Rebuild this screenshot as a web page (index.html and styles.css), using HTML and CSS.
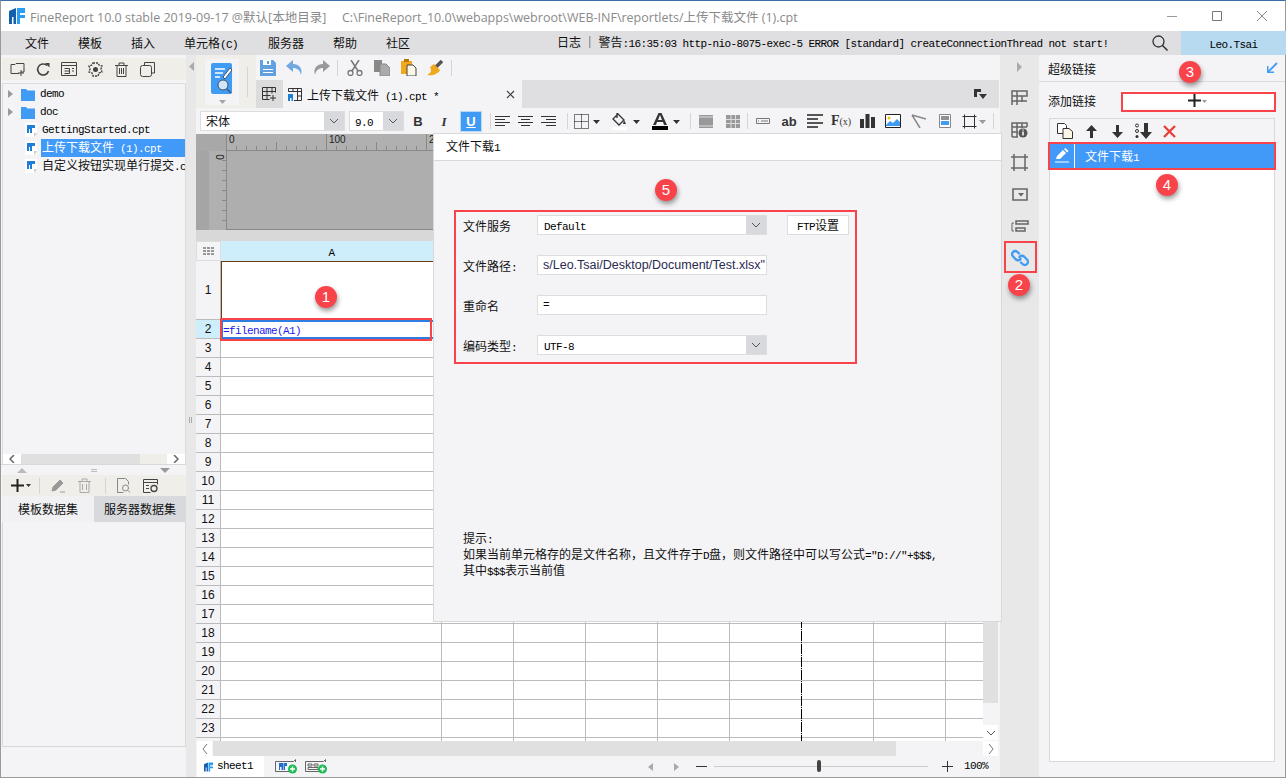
FILE: index.html
```html
<!DOCTYPE html>
<html lang="zh-CN">
<head>
    <meta charset="UTF-8">
    <title>FineReport 10.0</title>
    <link rel="stylesheet" href="styles.css">
</head>
<body>
<svg class="defs" xmlns="http://www.w3.org/2000/svg">
    <symbol id="logo" viewBox="0 0 16 16">
        <path d="M0 3 7 0v16H4.500V9H3v7H0z" fill="#1560ad"/>
        <path d="M8 0h8v5h-5v2h5v3h-5v6H8z" fill="#2a9df4"/>
    </symbol>
    <symbol id="folder" viewBox="0 0 14 13">
        <path d="M0 1h5l1.500 1.500H14V13H0z" fill="#3f9bf3"/>
    </symbol>
    <symbol id="cpt" viewBox="0 0 12 14">
        <path d="M0 0h12v10l-3 4H0z" fill="#fff"/>
        <path d="M9 14v-4h3z" fill="#ccc"/>
        <path d="M2 2h8v3H7v5H5V6H4v4H2z" fill="#1f7fd8"/>
    </symbol>
    <symbol id="chev" viewBox="0 0 10 6">
        <path d="M1 1l4 4 4-4" fill="none" stroke="#555"/>
    </symbol>
    <symbol id="caret" viewBox="0 0 7 4">
        <path d="M0 0h7L3.500 4z" fill="#333"/>
    </symbol>
</svg>

<div class="app">
    <header class="titlebar">
        <svg class="logo"><use href="#logo"/></svg>
        <span class="title">FineReport 10.0 stable 2019-09-17 @默认[本地目录]</span>
        <span class="path">C:\FineReport_10.0\webapps\webroot\WEB-INF\reportlets/上传下载文件 (1).cpt</span>
        <div class="winbtns">
            <svg width="14" height="14" viewBox="0 0 14 14"><path d="M2 7.500h10" stroke="#999"/></svg>
            <svg width="14" height="14" viewBox="0 0 14 14"><path d="M2.500 2.500h9v9h-9z" fill="none" stroke="#777"/></svg>
            <svg width="14" height="14" viewBox="0 0 14 14"><path d="M2 2l10 10M12 2 2 12" stroke="#888"/></svg>
        </div>
    </header>

    <nav class="menubar">
        <span>文件</span><span>模板</span><span>插入</span><span class="menu-cell">单元格<i class="m">(C)</i></span><span>服务器</span><span>帮助</span><span>社区</span>
        <div class="log">日志 ｜ 警告<i class="m">:16:35:03 http-nio-8075-exec-5 ERROR [standard] createConnectionThread not start!</i></div>
        <svg class="search" width="18" height="18" viewBox="0 0 18 18"><circle cx="7.500" cy="7.500" r="5.500" fill="none" stroke="#333" stroke-width="1.300"/><path d="M11.500 11.500l5 5" stroke="#333" stroke-width="1.600"/></svg>
        <div class="user"><i class="m">Leo.Tsai</i></div>
    </nav>

    <div class="main">
        <aside class="left">
            <div class="tools beige top">
                <span class="ic"><svg width="17" height="16" viewBox="0 0 17 16"><path d="M2 3.500h4l1-1h8v6M15 8v3H12M2 3.500v9h8" fill="none" stroke="#444"/><path d="M12 9v6M9 12h6" stroke="#444"/></svg></span>
                <span class="ic"><svg width="15" height="15" viewBox="0 0 15 15"><path d="M12.500 9A5.500 5.500 0 1 1 11 3.500" fill="none" stroke="#444" stroke-width="1.600"/><path d="M9 1h4.500v4.500z" fill="#444"/></svg></span>
                <span class="ic"><svg width="16" height="14" viewBox="0 0 16 14"><path d="M.5.500h15v13H.5zM.5 3.500h15M3.500 6.500h5v5h-5M3.500 9h5M11 6.500h2M11 9h2" fill="none" stroke="#444"/></svg></span>
                <span class="ic"><svg width="15" height="15" viewBox="0 0 15 15"><path d="M5 1h5l1 2 3 1-1 3 1 3-3 1-1 3H5l-1-3-3-1 1-3-1-3 3-1z" fill="none" stroke="#444" stroke-dasharray="2 1" stroke-width="1.400"/><circle cx="7.500" cy="7.500" r="2.500" fill="#444"/></svg></span>
                <span class="ic"><svg width="13" height="15" viewBox="0 0 13 15"><path d="M0 3.500h13M4 3V1h5v2M2 3.500v11h9v-11M4.500 6v6M6.500 6v6M8.500 6v6" fill="none" stroke="#444"/></svg></span>
                <span class="ic"><svg width="15" height="15" viewBox="0 0 15 15"><path d="M4.500 3V.5h10V11H12" fill="none" stroke="#444"/><rect x=".5" y="3.500" width="11" height="11" rx="2" fill="none" stroke="#444"/></svg></span>
            </div>
            <div class="tree">
                <div class="node"><b class="tri"></b><svg class="nic"><use href="#folder"/></svg><i class="m">demo</i></div>
                <div class="node"><b class="tri"></b><svg class="nic"><use href="#folder"/></svg><i class="m">doc</i></div>
                <div class="node leaf"><svg class="fic"><use href="#cpt"/></svg><span class="lbl plain"><i class="m">GettingStarted.cpt</i></span></div>
                <div class="node leaf"><svg class="fic"><use href="#cpt"/></svg><span class="lbl sel">上传下载文件<i class="m">&nbsp;(1).cpt</i></span></div>
                <div class="node leaf"><svg class="fic"><use href="#cpt"/></svg><span class="lbl">自定义按钮实现单行提交<i class="m">.cpt</i></span></div>
                <div class="tree-scroll">
                    <span class="sb-btn"><svg width="6" height="8" viewBox="0 0 6 8"><path d="M5 0 1 4l4 4" fill="none" stroke="#666" stroke-width="1.500"/></svg></span>
                    <span class="sb-thumb"></span><span class="sb-rest"></span>
                    <span class="sb-btn"><svg width="6" height="8" viewBox="0 0 6 8"><path d="M1 0l4 4-4 4" fill="none" stroke="#666" stroke-width="1.500"/></svg></span>
                </div>
            </div>
            <div class="split">
                <svg width="10" height="5" viewBox="0 0 10 5"><path d="M0 5h10L5 0z" fill="#bbb"/></svg>
                <span class="grip"></span>
                <svg width="10" height="5" viewBox="0 0 10 5"><path d="M0 0h10L5 5z" fill="#999"/></svg>
            </div>
            <div class="tools beige low">
                <svg class="l-plus" width="15" height="13" viewBox="0 0 13 13"><path d="M6.500 0v13M0 6.500h13" stroke="#222" stroke-width="2"/></svg>
                <svg class="l-car" width="5" height="3"><use href="#caret"/></svg>
                <b class="sep"></b>
                <span class="ic2"><svg width="15" height="15" viewBox="0 0 15 15"><path d="M1 13l1-4 7-7 3 3-7 7zM9 14h5" fill="#999" stroke="#999"/></svg></span>
                <span class="ic2"><svg width="13" height="15" viewBox="0 0 13 15"><path d="M0 3.500h13M4 3V1h5v2M2 3.500v11h9v-11M4.500 6v6M8.500 6v6" fill="none" stroke="#aaa"/></svg></span>
                <b class="sep"></b>
                <span class="ic2"><svg width="14" height="15" viewBox="0 0 14 15"><path d="M.5.500h8l3 3v3M.5.500v14h6" fill="none" stroke="#888"/><circle cx="8.500" cy="10" r="3" fill="none" stroke="#888"/><path d="M11 12.500l2 2" stroke="#888"/></svg></span>
                <span class="ic2"><svg width="15" height="14" viewBox="0 0 15 14"><path d="M.5.500h14v5M.5.500v13h7M.5 3.500h14M3 6.500h3M3 9.500h3" fill="none" stroke="#444"/><circle cx="11" cy="9.500" r="3" fill="none" stroke="#444" stroke-width="1.300"/></svg></span>
            </div>
            <div class="ds-tabs">
                <span>模板数据集</span><span class="on">服务器数据集</span>
            </div>
            <div class="ds-list"></div>
        </aside>

        <div class="gutter">
            <svg class="gut-top" width="5" height="9" viewBox="0 0 5 9"><path d="M5 0v9L0 4.500z" fill="#aaa"/></svg>
            <span class="gut-grip"></span>
        </div>

        <section class="center">
            <div class="toolbar">
                <div class="tpl-box">
                    <div class="tpl-btn">
                        <svg width="22" height="32" viewBox="0 0 22 32"><rect width="21" height="31" rx="2" fill="#3f9bf3"/><path d="M4 6h10M4 10h8M4 14h5" stroke="#fff" stroke-width="1.500"/><path d="M12 14l7-9 2 2-7 9z" fill="#fff" stroke="#456"/><circle cx="12" cy="22" r="5" fill="#cfe6fb" stroke="#456"/><path d="M16 26l4 4" stroke="#456" stroke-width="1.500"/></svg>
                        <svg class="tpl-car" width="7" height="4"><use href="#caret"/></svg>
                    </div>
                    <b class="sep tall"></b>
                </div>
                <div class="tool-col">
                    <div class="tool-row">
                        <span class="ic3"><svg width="16" height="16" viewBox="0 0 16 16"><path d="M0 0h13l3 3v13H0z" fill="#62a0e0"/><path d="M3 0h8v5H3zM3 9h10v1H3zM3 12h10v1H3z" fill="#fff"/><path d="M7 1h2v3H7z" fill="#62a0e0"/></svg></span>
                        <span class="ic3"><svg width="17" height="15" viewBox="0 0 17 15"><path d="M7 0 0 6l7 6V8c4 0 7 2 8 7 2-7-2-11-8-11z" fill="#72a8e0"/></svg></span>
                        <span class="ic3"><svg width="17" height="15" viewBox="0 0 17 15"><path d="M10 0l7 6-7 6V8c-4 0-7 2-8 7C0 8 4 4 10 4z" fill="#999"/></svg></span>
                        <b class="sep"></b>
                        <span class="ic3"><svg width="16" height="16" viewBox="0 0 16 16"><path d="M4 0l7 11M12 0 5 11" stroke="#777" stroke-width="1.500"/><circle cx="3.500" cy="13" r="2.500" fill="none" stroke="#777" stroke-width="1.300"/><circle cx="12.500" cy="13" r="2.500" fill="none" stroke="#777" stroke-width="1.300"/></svg></span>
                        <span class="ic3"><svg width="16" height="16" viewBox="0 0 16 16"><path d="M0 0h8v12H0z" fill="#888"/><path d="M6 4h6l4 4v8H6z" fill="#aaa" stroke="#888"/></svg></span>
                        <span class="ic3"><svg width="16" height="17" viewBox="0 0 16 17"><path d="M0 2h11v13H0z" fill="#f2a81c"/><path d="M3 0h5v3H3z" fill="#b87800"/><path d="M6 6h6l3 3v8H6z" fill="#fbf6e6" stroke="#444"/></svg></span>
                        <span class="ic3"><svg width="17" height="16" viewBox="0 0 17 16"><path d="M9 7l6-6" stroke="#555" stroke-width="3.500"/><path d="M7 4l6 6c-2 4-7 6-13 5 4-2 5-5 3-8z" fill="#f2a81c"/></svg></span>
                        <b class="sep"></b>
                    </div>
                    <div class="tabbar">
                        <span class="new-tab"><svg width="15" height="14" viewBox="0 0 15 14"><path d="M.5.500h13v5M.5.500v12h7M5 .5v12M.5 4.500h13M.5 8.500h8M10 .5v6M11 8v6M8 11h6" fill="none" stroke="#333"/></svg></span>
                        <span class="tab">
                            <svg width="14" height="13" viewBox="0 0 14 13"><path d="M.5.500h13v12H6M.5.500v3M.5 3.500h13M5 .5v3M9.500.5v12M9.500 8h4" fill="none" stroke="#333"/><path d="M0 6h5v7H3.500V10H2v3H0z" fill="#1f7fd8"/></svg>
                            <span class="tab-name">上传下载文件<i class="m">&nbsp;(1).cpt *</i></span>
                            <svg class="tab-x" width="9" height="9" viewBox="0 0 9 9"><path d="M1 1l7 7M8 1 1 8" stroke="#444" stroke-width="1.200"/></svg>
                        </span>
                        <svg class="tab-menu" width="13" height="11" viewBox="0 0 13 11"><path d="M0 0h7v3H3v5H0z" fill="#333"/><path d="M5 5h8l-4 5z" fill="#333"/></svg>
                    </div>
                </div>
            </div>

            <div class="fmtbar">
                <div class="combo font"><span>宋体</span><span class="arrow"><svg width="10" height="6"><use href="#chev"/></svg></span></div>
                <div class="combo size"><span><i class="m">9.0</i></span><span class="arrow"><svg width="10" height="6"><use href="#chev"/></svg></span></div>
                <span class="fb b-first"><b class="letter">B</b></span>
                <span class="fb"><b class="letter it">I</b></span>
                <span class="fb ubtn"><b class="letter under">U</b></span>
                <b class="sep s8"></b>
                <span class="fb w23"><svg width="15" height="11" viewBox="0 0 15 11"><path d="M0 .5h15M0 3.500h10M0 6.500h15M0 9.500h10" stroke="#333"/></svg></span>
                <span class="fb w23"><svg width="15" height="11" viewBox="0 0 15 11"><path d="M0 .5h15M3 3.500h9M0 6.500h15M3 9.500h9" stroke="#333"/></svg></span>
                <span class="fb w23"><svg width="15" height="11" viewBox="0 0 15 11"><path d="M0 .5h15M5 3.500h10M0 6.500h15M5 9.500h10" stroke="#333"/></svg></span>
                <b class="sep s7"></b>
                <span class="fb w32"><svg width="15" height="15" viewBox="0 0 15 15"><path d="M.5.500h14v14H.5zM7.500.5v14M.5 7.500h14" fill="none" stroke="#000" stroke-dasharray="1 1"/></svg><svg class="mini" width="7" height="4"><use href="#caret"/></svg></span>
                <span class="fb w40"><svg width="16" height="17" viewBox="0 0 16 17"><path d="M6 1l6 6-5 5-6-6zM5 0v5" fill="none" stroke="#333" stroke-width="1.300"/><path d="M12 7l2 4h-3z" fill="#333"/><path d="M0 14h15v3H0z" fill="#fff"/></svg><svg class="mini" width="7" height="4"><use href="#caret"/></svg></span>
                <span class="fb w40"><svg width="16" height="17" viewBox="0 0 16 17"><path d="M1 12 6.500 0h3L15 12h-3l-1-3H5l-1 3zM6 7h4L8 2z" fill="#333" fill-rule="evenodd"/><path d="M0 13h16v4H0z" fill="#000"/></svg><svg class="mini" width="7" height="4"><use href="#caret"/></svg></span>
                <b class="sep s-a"></b>
                <span class="fb w27"><svg width="14" height="13" viewBox="0 0 14 13"><path d="M0 0h14v13H0z" fill="#999"/><path d="M0 2h14M0 11h14" stroke="#ddd"/></svg></span>
                <span class="fb w27"><svg width="14" height="13" viewBox="0 0 14 13"><path d="M0 0h14v13H0z" fill="#999"/><path d="M0 4.500h14M0 8.500h14M5 0v13M9.500 0v13" stroke="#ddd"/></svg></span>
                <b class="sep s-b"></b>
                <span class="fb w26"><svg width="14" height="6" viewBox="0 0 14 6"><path d="M.5.500h13v5H.5z" fill="none" stroke="#777"/><path d="M5 3h7M2 3h1" stroke="#777"/></svg></span>
                <span class="fb w26"><b class="ab">ab</b></span>
                <span class="fb w26"><svg width="16" height="14" viewBox="0 0 16 14"><path d="M0 1h16M0 5h11M0 9h16M0 13h11" stroke="#555" stroke-width="2"/></svg></span>
                <span class="fb w26"><span class="fx">F<small>(x)</small></span></span>
                <span class="fb w26"><svg width="15" height="14" viewBox="0 0 15 14"><path d="M0 5h4v9H0zM5.500 0h4v14h-4zM11 3h4v11h-4z" fill="#333"/></svg></span>
                <span class="fb w26"><svg width="16" height="14" viewBox="0 0 16 14"><path d="M.5.500h15v13H.5z" fill="#fff" stroke="#222"/><path d="M1 11l4-4 3 2 4-4 3 3v4H1z" fill="#3f9bf3"/><circle cx="4" cy="4" r="1.500" fill="#f2c21c"/></svg></span>
                <span class="fb w26"><svg width="16" height="14" viewBox="0 0 16 14"><path d="M1 1l14 4M1 1l8 13" stroke="#888" stroke-width="1.500"/></svg></span>
                <span class="fb w26"><svg width="12" height="14" viewBox="0 0 12 14"><path d="M.5.500h11v13H.5z" fill="#fff" stroke="#888"/><path d="M2 3h8M2 5h8" stroke="#222"/><path d="M2 7h8v4H2z" fill="#3f9bf3"/></svg></span>
                <span class="fb w30"><svg width="15" height="15" viewBox="0 0 15 15"><path d="M2.500.5v14M12.500.5v14M.5 2.500h14M.5 12.500h14" fill="none" stroke="#333"/></svg><svg class="mini" width="7" height="4"><path d="M0 0h7L3.500 4z" fill="#999"/></svg></span>
                <b class="sep s-c"></b>
            </div>

            <div class="ruler">
                <div class="r-corner"></div>
                <div class="r-top"><span>0</span><span>100</span><span>200</span></div>
                <div class="r-edge"></div>
                <div class="r-left"><span>0</span></div>
                <div class="r-paper"></div>
                <div class="r-foot"></div>
            </div>

            <div class="sheet-wrap">
                <div class="sheet">
                    <div class="row head">
                        <span class="corner"><svg width="11" height="8" viewBox="0 0 11 8"><path d="M0 0h3v2H0zM4 0h3v2H4zM8 0h3v2H8zM0 3h3v2H0zM4 3h3v2H4zM8 3h3v2H8zM0 6h3v2H0zM4 6h3v2H4zM8 6h3v2H8z" fill="#999"/></svg></span>
                        <span class="col-a"><i class="m">A</i></span>
                    </div>
                    <div class="row first"><span class="num">1</span><span class="a sel-top"></span><span class="rest"></span></div>
                    <div class="row"><span class="num cur">2</span><span class="a cur-cell"><i class="m f">=filename(A1)</i></span><span class="rest"></span></div>
                    <div class="row"><span class="num">3</span><span class="a"></span><span class="rest"></span></div>
                    <div class="row"><span class="num">4</span><span class="a"></span><span class="rest"></span></div>
                    <div class="row"><span class="num">5</span><span class="a"></span><span class="rest"></span></div>
                    <div class="row"><span class="num">6</span><span class="a"></span><span class="rest"></span></div>
                    <div class="row"><span class="num">7</span><span class="a"></span><span class="rest"></span></div>
                    <div class="row"><span class="num">8</span><span class="a"></span><span class="rest"></span></div>
                    <div class="row"><span class="num">9</span><span class="a"></span><span class="rest"></span></div>
                    <div class="row"><span class="num">10</span><span class="a"></span><span class="rest"></span></div>
                    <div class="row"><span class="num">11</span><span class="a"></span><span class="rest"></span></div>
                    <div class="row"><span class="num">12</span><span class="a"></span><span class="rest"></span></div>
                    <div class="row"><span class="num">13</span><span class="a"></span><span class="rest"></span></div>
                    <div class="row"><span class="num">14</span><span class="a"></span><span class="rest"></span></div>
                    <div class="row"><span class="num">15</span><span class="a"></span><span class="rest"></span></div>
                    <div class="row"><span class="num">16</span><span class="a"></span><span class="rest"></span></div>
                    <div class="row"><span class="num">17</span><span class="a"></span><span class="rest"></span></div>
                    <div class="row"><span class="num">18</span><span class="a"></span><span class="rest"></span></div>
                    <div class="row"><span class="num">19</span><span class="a"></span><span class="rest"></span></div>
                    <div class="row"><span class="num">20</span><span class="a"></span><span class="rest"></span></div>
                    <div class="row"><span class="num">21</span><span class="a"></span><span class="rest"></span></div>
                    <div class="row"><span class="num">22</span><span class="a"></span><span class="rest"></span></div>
                    <div class="row"><span class="num">23</span><span class="a"></span><span class="rest"></span></div>
                    <div class="row tail"><span class="num"></span><span class="a"></span><span class="rest"></span></div>
                    <span class="page-break"></span>
                </div>
                <div class="vscroll">
                    <span class="v-thumb"></span>
                    <span class="sb-btn v-btn"><svg width="10" height="6"><use href="#chev"/></svg></span>
                </div>
            </div>

            <div class="hscroll">
                <span class="sb-btn h-btn"><svg width="6" height="10" viewBox="0 0 6 10"><path d="M5 0 1 5l4 5" fill="none" stroke="#777"/></svg></span>
                <span class="h-thumb"></span>
                <span class="sb-btn h-btn"><svg width="6" height="10" viewBox="0 0 6 10"><path d="M1 0l4 5-4 5" fill="none" stroke="#777"/></svg></span>
            </div>

            <div class="sheetbar">
                <span class="sheet-tab"><svg width="9" height="10"><use href="#logo"/></svg><i class="m">sheet1</i></span>
                <svg class="add1" width="23" height="15" viewBox="0 0 23 15"><path d="M.5 2.500h18l2-2v2.500M.5 2.500v10h14" fill="none" stroke="#666"/><path d="M4 4h4v7H6.500V8H5v3H4zM8.500 4H12v3h-2v4H8.500z" fill="#1f6fc8"/><circle cx="17.500" cy="10" r="4.500" fill="#1dbb55"/><path d="M17.500 7.500v5M15 10h5" stroke="#fff" stroke-width="1.500"/></svg>
                <svg class="add2" width="23" height="15" viewBox="0 0 23 15"><path d="M.5 2.500h18l2-2v2.500M.5 2.500v10h14M3 5h4v2H3zM9 5h4v2H9zM3 8.500h10v2H3z" fill="none" stroke="#666"/><circle cx="17.500" cy="10" r="4.500" fill="#1dbb55"/><path d="M17.500 7.500v5M15 10h5" stroke="#fff" stroke-width="1.500"/></svg>
                <svg class="nav1" width="5" height="8" viewBox="0 0 5 8"><path d="M5 0v8L0 4z" fill="#aaa"/></svg>
                <svg class="nav2" width="5" height="8" viewBox="0 0 5 8"><path d="M0 0v8l5-4z" fill="#aaa"/></svg>
                <svg class="minus" width="11" height="3" viewBox="0 0 11 3"><path d="M0 1.500h11" stroke="#333"/></svg>
                <span class="slider"><span class="knob"></span></span>
                <svg class="plus" width="11" height="11" viewBox="0 0 11 11"><path d="M0 5.500h11M5.500 0v11" stroke="#333"/></svg>
                <i class="m zoom">100%</i>
            </div>
        </section>

        <div class="sidebar">
            <svg class="side-tri" width="5" height="10" viewBox="0 0 5 10"><path d="M0 0v10l5-5z" fill="#aaa"/></svg>
            <span class="side"><svg width="17" height="16" viewBox="0 0 17 16"><path d="M1 15V1h15v5H1M6 1v14M11 6v6M1 11h15" fill="none" stroke="#666" stroke-width="1.500"/></svg></span>
            <span class="side"><svg width="17" height="16" viewBox="0 0 17 16"><path d="M1 15V1h15v4M1 5h15M1 10h6M6 1v14M11 1v5M1 15h6" fill="none" stroke="#666" stroke-width="1.500"/><circle cx="12" cy="11" r="4.500" fill="#555"/><path d="M12 9.500v4M12 7.500v1" stroke="#fff" stroke-width="1.500"/></svg></span>
            <span class="side"><svg width="17" height="17" viewBox="0 0 17 17"><path d="M3 0v17M14 0v17M0 3h17M0 14h17" stroke="#666" stroke-width="1.500"/></svg></span>
            <span class="side"><svg width="16" height="13" viewBox="0 0 16 13"><path d="M1 1h14v11H1z" fill="none" stroke="#666" stroke-width="1.600"/><path d="M6 5h6L9 8.500z" fill="#666"/></svg></span>
            <span class="side"><svg width="18" height="13" viewBox="0 0 18 13"><path d="M3 3H1v8h2" fill="none" stroke="#666"/><path d="M5 1h12v3H5zM5 8h9v3H5z" fill="none" stroke="#666" stroke-width="1.500"/></svg></span>
            <span class="side"><svg width="18" height="18" viewBox="0 0 18 18"><g fill="none" stroke="#3f9bf3" stroke-width="2.400" stroke-linecap="round"><path d="M8 4.500 6.500 3A3 3 0 0 0 2 7.500L5 10.500A3 3 0 0 0 9.500 10"/><path d="M10 13.500l1.500 1.500A3 3 0 0 0 16 10.500L13 7.500A3 3 0 0 0 8.500 8"/></g></svg></span>
        </div>

        <aside class="right">
            <div class="r-head"><span>超级链接</span>
                <svg width="12" height="12" viewBox="0 0 12 12"><path d="M11 1 2 10" stroke="#3f9bf3" stroke-width="1.800"/><path d="M1 4v7h7v-1.500H2.500V4z" fill="#3f9bf3"/></svg>
            </div>
            <div class="r-add"><span class="r-label">添加链接</span>
                <span class="r-addbtn"><svg width="13" height="13" viewBox="0 0 13 13"><path d="M6.500 0v13M0 6.500h13" stroke="#222" stroke-width="2"/></svg><svg class="r-car" width="5" height="3"><path d="M0 0h5L2.500 3z" fill="#999"/></svg></span>
            </div>
            <div class="links">
                <div class="links-tools">
                    <span class="lt"><svg width="16" height="16" viewBox="0 0 16 16"><path d="M.5.500h7l2 2v8h-9z" fill="#fff" stroke="#333"/><path d="M6 5.500h6l3.500 3v7H6z" fill="#fbf6e6" stroke="#333"/></svg></span>
                    <span class="lt"><svg width="11" height="13" viewBox="0 0 11 13"><path d="M5.500 0 11 6H7v7H4V6H0z" fill="#333"/></svg></span>
                    <span class="lt"><svg width="11" height="13" viewBox="0 0 11 13"><path d="M5.500 13 11 7H7V0H4v7H0z" fill="#333"/></svg></span>
                    <span class="lt"><svg width="17" height="16" viewBox="0 0 17 16"><circle cx="2" cy="2.500" r="1.500" fill="none" stroke="#333"/><circle cx="2" cy="8" r="1.500" fill="none" stroke="#333"/><circle cx="2" cy="13.500" r="1.500" fill="#333"/><path d="M11 16l6-7h-4V0H9v9H5z" fill="#333"/></svg></span>
                    <span class="lt"><svg width="13" height="13" viewBox="0 0 13 13"><path d="M1 1l11 11M12 1 1 12" stroke="#e8403a" stroke-width="2.400"/></svg></span>
                </div>
                <div class="link-item">
                    <span class="pen"><svg width="15" height="15" viewBox="0 0 15 15"><path d="M1 11l1-3 6-6 3 3-6 6zM9 1l1.500-1L13.500 3 12 4.500z" fill="#fff"/><path d="M0 14h14" stroke="#fff"/></svg></span>
                    <span class="link-name">文件下载<i class="m">1</i></span>
                </div>
            </div>
        </aside>
    </div>

    <div class="dialog">
        <div class="dlg-head">文件下载<i class="m">1</i></div>
        <div class="dlg-form">
            <div class="field"><label>文件服务</label><div class="select"><span><i class="m">Default</i></span><span class="arrow"><svg width="10" height="6"><use href="#chev"/></svg></span></div><span class="ftp"><i class="m">FTP</i>设置</span></div>
            <div class="field"><label>文件路径<i class="m">:</i></label><div class="input path-val">s/Leo.Tsai/Desktop/Document/Test.xlsx"</div></div>
            <div class="field"><label>重命名</label><div class="input"><i class="m">=</i></div></div>
            <div class="field"><label>编码类型<i class="m">:</i></label><div class="select"><span><i class="m">UTF-8</i></span><span class="arrow"><svg width="10" height="6"><use href="#chev"/></svg></span></div></div>
        </div>
        <div class="hint">
            <div>提示<i class="m">:</i></div>
            <div>如果当前单元格存的是文件名称，且文件存于<i class="m">D</i>盘，则文件路径中可以写公式<i class="m">="D://"+$$$,</i></div>
            <div>其中<i class="m">$$$</i>表示当前值</div>
        </div>
    </div>

    <span class="mark m1"></span>
    <span class="mark m2"></span>
    <span class="mark m3"></span>
    <span class="mark m4"></span>
    <span class="mark m5"></span>
    <span class="badge b1">1</span>
    <span class="badge b2">2</span>
    <span class="badge b3">3</span>
    <span class="badge b4">4</span>
    <span class="badge b5">5</span>
</div>
</body>
</html>
```

FILE: styles.css
```css
* { margin: 0; padding: 0; box-sizing: border-box; }

html, body { width: 1286px; height: 778px; overflow: hidden; }

body {
    font-family: "Noto Sans CJK SC", "Liberation Sans", sans-serif;
    font-size: 12px;
    color: #111;
    background: #f4f4f6;
}

i { font-style: normal; }
svg { display: block; flex: none; }
.defs { display: none; }

/* SimSun latin is half width and tall, squeeze Liberation Mono to the same 6px advance */
.m { font: 11px/1 "Liberation Mono", monospace; letter-spacing: -0.6px; color: #000; }

.app {
    position: relative;
    width: 1286px;
    height: 778px;
    display: flex;
    flex-direction: column;
    border-top: 1px solid #3a6ea5;
    border-left: 1px solid #9a9a9a;
    border-right: 1px solid #9a9a9a;
    border-bottom: 1px solid #9a9a9a;
}

/* title bar */
.titlebar {
    height: 30px;
    background: #fff;
    display: flex;
    align-items: center;
    padding-left: 8px;
    font-family: "Open Sans", "Noto Sans CJK SC", sans-serif;
    color: #8a8a8a;
    flex: none;
}
.logo { width: 16px; height: 16px; }
.title { margin-left: 5px; width: 312px; white-space: nowrap; font-size: 12.500px; }
.path { white-space: nowrap; font-size: 12.500px; }
.winbtns { margin-left: auto; display: flex; gap: 31px; padding-right: 16px; }

/* menu */
.menubar {
    height: 24px;
    background: #dfdfe2;
    display: flex;
    align-items: center;
    gap: 29px;
    padding-left: 24px;
    line-height: 24px;
    flex: none;
}
.menu-cell { margin-right: 1px; }
.log { position: absolute; left: 556px; top: 29px; white-space: nowrap; }
.search { margin-left: auto; }
.user {
    width: 105px;
    height: 24px;
    background: #b8daf0;
    text-align: center;
    margin-left: -17px;
    margin-right: -1px;
}

.main { flex: 1; display: flex; min-height: 0; }

/* left column */
.left { width: 185px; display: flex; flex-direction: column; flex: none; }
.beige { background: #f0eee8; }
.tools { display: flex; align-items: center; flex: none; }
.tools.top { height: 22px; margin-top: 3px; padding-left: 2px; margin-left: 1px; }
.ic { width: 26px; display: flex; justify-content: center; }

.tree {
    height: 381px;
    margin: 3px 0 0 1px;
    border: 1px solid #dcdcdc;
    border-bottom: 0;
    padding-top: 1px;
    display: flex;
    flex-direction: column;
    overflow: hidden;
    position: relative;
    flex: none;
}
.node { height: 18px; display: flex; align-items: center; white-space: nowrap; position: relative; flex: none; }
.tri {
    width: 0; height: 0;
    margin-left: 5px;
    border-left: 5px solid #999;
    border-top: 4px solid transparent;
    border-bottom: 4px solid transparent;
}
.nic { width: 14px; height: 13px; margin: 0 5px 0 8px; }
.fic { width: 12px; height: 14px; margin-left: 22px; }
.lbl { display: block; margin-left: 4px; height: 18px; line-height: 15px; flex: 1; padding-left: 1px; overflow: hidden; }
.lbl.plain { display: flex; align-items: center; }
.sel { background: #4199f8; color: #fff; }
.sel .m { color: #fff; }
.tree-scroll {
    position: absolute;
    left: 0; right: 0; bottom: 0;
    height: 10px;
    display: flex;
}
.sb-btn { background: #fff; display: flex; align-items: center; justify-content: center; flex: none; }
.tree-scroll .sb-btn { width: 18px; }
.sb-thumb { flex: 1; background: #e0e0e0; }
.sb-rest { width: 27px; background: #f0eee8; }

.split {
    height: 11px;
    background: #f4f4f6;
    border-top: 1px solid #d8d8d8;
    display: flex;
    align-items: center;
    justify-content: space-between;
    padding: 0 16px;
    flex: none;
}
.grip { width: 6px; height: 3px; border: solid #bbb; border-width: 1px 0; }

.tools.low { height: 21px; padding-left: 8px; margin-left: 1px; }
.l-car { margin-left: 1px; }
.sep { display: block; width: 1px; height: 16px; background: #d5d5d5; flex: none; }
.low .sep { margin: 0 5px 0 8px; }
.ic2 { width: 26px; display: flex; justify-content: center; }

.ds-tabs { display: flex; height: 26px; line-height: 25px; text-align: center; font-size: 12px; flex: none; margin-left: 1px; }
.ds-tabs span { flex: 1; background: #f1f1f3; }
.ds-tabs .on { background: #d8d9dd; }
.ds-list { height: 225px; margin-left: 1px; border: 1px solid #d8d8d8; border-top: 0; flex: none; }

/* gutter between left column and sheet */
.gutter { width: 10px; background: #e8e8e8; position: relative; flex: none; }
.gut-top { position: absolute; left: 3px; top: 7px; }
.gut-grip { position: absolute; left: 3px; top: 362px; width: 3px; height: 6px; border: solid #aaa; border-width: 0 1px; }

/* centre */
.center { width: 804px; display: flex; flex-direction: column; flex: none; }
.toolbar { height: 53px; display: flex; flex: none; }
.tpl-box { width: 60px; background: #f0eee8; display: flex; align-items: center; padding-left: 9px; flex: none; }
.tpl-btn {
    width: 34px;
    height: 46px;
    background: #f4f4f6;
    display: flex;
    flex-direction: column;
    align-items: center;
    padding-top: 4px;
    flex: none;
}
.tpl-car { margin-top: 5px; opacity: 0.4; }
.sep.tall { height: 30px; margin-left: 8px; }
.tool-col { flex: 1; display: flex; flex-direction: column; }
.tool-row { height: 25px; display: flex; align-items: center; margin-left: -2px; }
.ic3 { width: 27px; display: flex; justify-content: center; }
.tool-row .sep { margin: 0 3px 0 2px; }

.tabbar { height: 28px; background: #dfdfe2; display: flex; align-items: center; position: relative; margin-right: 1px; }
.new-tab { width: 27px; height: 28px; background: #dcdcdc; display: flex; align-items: center; justify-content: center; flex: none; }
.tab { width: 239px; height: 28px; background: #f4f4f6; display: flex; align-items: center; padding-left: 5px; position: relative; flex: none; }
.tab-name { margin-left: 5px; white-space: nowrap; }
.tab-x { position: absolute; right: 7px; top: 10px; }
.tab-menu { margin-left: auto; margin-right: 12px; }

.fmtbar { height: 26px; display: flex; align-items: center; padding-left: 4px; flex: none; }
.combo { display: flex; height: 20px; background: #fff; border: 1px solid #ddd; line-height: 18px; flex: none; }
.combo > span:first-child { flex: 1; padding-left: 5px; }
.combo.font { width: 145px; font-size: 12px; }
.combo.size { width: 55px; margin-left: 4px; }
.combo .arrow, .select .arrow {
    width: 20px;
    background: #d8d9dd;
    display: flex;
    align-items: center;
    justify-content: center;
    flex: none;
}
.fb { width: 26px; height: 21px; display: flex; align-items: center; justify-content: center; flex: none; }
.b-first { margin-left: 1px; }
.letter { font: bold 13px/1 "Liberation Sans", sans-serif; color: #333; }
.letter.it { font-family: "Liberation Serif", serif; font-style: italic; }
.letter.under { color: #fff; text-decoration: underline; }
.ubtn { width: 22px; background: #3f9bf3; border: 1px solid #b8d8f4; margin-left: 3px; }
.s8 { margin-left: 8px; }
.s7 { margin-left: 7px; }
.s-a { margin: 0 1px 0 4px; }
.s-b { margin: 0 2px 0 1px; }
.s-c { margin-left: 3px; }
.w23 { width: 23px; }
.w26 { width: 26px; }
.w27 { width: 27px; }
.w30 { width: 32px; gap: 2px; }
.w32 { width: 38px; gap: 4px; }
.w40 { width: 40px; gap: 5px; }
.mini { margin-top: 1px; }
.ab { font: bold 13px/1 "Liberation Sans", sans-serif; color: #333; }
.fx { font: bold 14px/1 "Liberation Serif", serif; color: #333; }
.fx small { font-size: 10px; font-weight: normal; }

/* ruler */
.ruler {
    height: 107px;
    display: grid;
    grid-template-columns: 13px 17px 1fr;
    grid-template-rows: 17px 79px 11px;
    background: #a8a8a8;
    flex: none;
}
.r-corner { grid-column: 1 / 3; }
.r-top {
    background:
        repeating-linear-gradient(90deg, #888 0 1px, transparent 1px 100px) 0 0 / 100% 100% no-repeat,
        repeating-linear-gradient(90deg, #888 0 1px, transparent 1px 50px) 0 100% / 100% 8px no-repeat,
        repeating-linear-gradient(90deg, #888 0 1px, transparent 1px 10px) 0 100% / 100% 4px no-repeat,
        #b0b0b0;
    display: flex;
    font: 10px/12px "Liberation Sans", sans-serif;
    color: #222;
    border-bottom: 1px solid #888;
}
.r-top span { width: 100px; padding-left: 3px; flex: none; }
.r-edge { background: #a5a5a5; }
.r-left {
    background:
        repeating-linear-gradient(0deg, transparent 0 9px, #888 9px 10px) 100% 0 / 4px 100% no-repeat,
        #b0b0b0;
    font: 10px/12px "Liberation Sans", sans-serif;
}
.r-left span { display: block; transform: rotate(90deg); width: 12px; margin-left: 4px; text-align: center; }
.r-paper { background: #aeaeae; border-left: 1px solid #888; border-bottom: 1px solid #888; }
.r-foot { grid-column: 1 / 4; background: #d8d8d8; }

/* sheet */
.sheet-wrap { flex: 1; display: flex; min-height: 0; padding-right: 2px; }
.sheet { width: 787px; position: relative; overflow: hidden; background: #fff; flex: none; }
.row { display: flex; height: 19px; }
.row.head { height: 20px; }
.row.first { height: 59px; }
.row.tail { height: 3px; }
.row.tail span { border-bottom: 0; }
.corner {
    width: 25px;
    background: #f4f4f6;
    border: 1px solid #ddd;
    display: flex;
    align-items: center;
    justify-content: center;
    flex: none;
}
.col-a { width: 221px; background: #cfeefb; text-align: center; line-height: 20px; flex: none; }
.num {
    width: 25px;
    background: #f4f4f6;
    border-right: 1px solid #bbb;
    border-bottom: 1px solid #bbb;
    text-align: center;
    font: 12px/18px "Liberation Sans", sans-serif;
    flex: none;
}
.first .num { line-height: 58px; }
.num.cur { background: #cfeefb; }
.a { width: 221px; border-right: 1px solid #bbb; border-bottom: 1px solid #bbb; flex: none; }
.rest {
    flex: 1;
    border-bottom: 1px solid #bbb;
    background: repeating-linear-gradient(90deg, transparent 0 71px, #bbb 71px 72px);
}
.sel-top { border-left: 1px solid #6b3d10; border-top: 1px solid #6b3d10; border-bottom: 0; }
.cur-cell { border: 2px solid #2f7de0; line-height: 14px; }
.f { color: #1a1af0; }
.page-break {
    position: absolute;
    left: 605px;
    top: 0;
    bottom: 0;
    width: 1px;
    background: repeating-linear-gradient(180deg, #000 0 10px, #ddd 10px 11px, #000 11px 12px, #ddd 12px 13px);
}

.vscroll { width: 15px; display: flex; flex-direction: column; flex: none; position: relative; }
.v-thumb { height: 462px; background: #e0e0e0; flex: none; }
.v-btn { width: 15px; height: 15px; position: absolute; bottom: 1px; left: 0; }

.hscroll { height: 15px; display: flex; padding-left: 1px; margin-right: 2px; gap: 1px; flex: none; position: relative; }
.h-btn { width: 15px; }
.h-thumb { width: 683px; background: #e0e0e0; }
.hscroll .h-btn:last-child { margin-left: auto; }

.sheetbar { height: 21px; display: flex; align-items: center; position: relative; background: #f4f4f6; flex: none; }
.sheet-tab {
    width: 67px;
    height: 100%;
    background: #fff;
    margin-left: 1px;
    display: flex;
    align-items: center;
    gap: 4px;
    padding-left: 7px;
    flex: none;
}
.add1 { margin-left: 11px; }
.add2 { margin-left: 7px; }
.nav1 { margin-left: 320px; }
.nav2 { margin-left: 21px; }
.minus { margin-left: 17px; }
.slider { display: block; width: 214px; height: 1px; background: #ccc; margin-left: 7px; position: relative; flex: none; }
.knob { position: absolute; left: 103px; top: -6px; width: 4px; height: 12px; border-radius: 2px; background: #444; }
.plus { margin-left: 14px; }
.zoom { margin-left: 11px; }

/* icon strip */
.sidebar {
    width: 39px;
    background: #e8e8e8;
    display: flex;
    flex-direction: column;
    align-items: center;
    padding-top: 7px;
    flex: none;
}
.side-tri { margin-bottom: 10px; }
.side { height: 32px; display: flex; align-items: center; justify-content: center; flex: none; }

/* right panel */
.right { flex: 1; display: flex; flex-direction: column; min-width: 0; }
.r-head {
    height: 27px;
    border-bottom: 1px solid #dcdcdc;
    display: flex;
    align-items: center;
    justify-content: space-between;
    padding: 0 7px 0 9px;
    font-size: 12px;
    flex: none;
}
.r-add { height: 36px; display: flex; align-items: center; padding-left: 9px; flex: none; }
.r-label { width: 73px; }
.r-addbtn {
    width: 153px;
    height: 18px;
    background: #fff;
    display: flex;
    align-items: center;
    justify-content: center;
    gap: 1px;
}
.r-car { margin-top: 3px; }
.links {
    width: 226px;
    height: 644px;
    margin-left: 10px;
    background: #fff;
    border: 1px solid #d8d8d8;
    flex: none;
}
.links-tools { height: 24px; background: #f4f4f6; display: flex; align-items: center; padding-left: 2px; }
.lt { width: 26px; display: flex; justify-content: center; }
.link-item { height: 25px; background: #4199f8; color: #fff; display: flex; align-items: center; }
.link-item .m { color: #fff; }
.pen { width: 25px; height: 100%; border-right: 1px solid #fff; display: flex; align-items: center; justify-content: center; flex: none; }
.link-name { padding-left: 10px; }

/* dialog lying over the sheet */
.dialog {
    position: absolute;
    left: 432px;
    top: 132px;
    width: 569px;
    height: 489px;
    background: #f4f4f6;
    border: 1px solid #d8d8d8;
}
.dlg-head { height: 27px; line-height: 23px; background: #fff; border-bottom: 1px solid #d8d8d8; padding-left: 12px; }
.dlg-form { padding: 54px 0 0 29px; display: flex; flex-direction: column; gap: 20px; }
.field { display: flex; align-items: center; height: 20px; }
.field label { width: 74px; flex: none; }
.select, .input { width: 230px; height: 20px; background: #fff; border: 1px solid #ddd; display: flex; align-items: center; line-height: 18px; flex: none; }
.select { align-items: stretch; }
.select > span:first-child { flex: 1; padding-left: 6px; }
.input { padding-left: 5px; }
.path-val { font: 12.500px/18px "Liberation Sans", sans-serif; color: #2a2a50; white-space: nowrap; overflow: hidden; }
.ftp { width: 62px; height: 20px; margin-left: 20px; background: #fff; border: 1px solid #ddd; text-align: center; line-height: 18px; flex: none; }
.hint { margin: 175px 0 0 29px; line-height: 15px; }

/* annotations */
.mark { position: absolute; border: 2px solid #f9434a; }
.m1 { left: 219px; top: 317px; width: 212px; height: 23px; }
.m2 { left: 1003px; top: 240px; width: 33px; height: 32px; }
.m3 { left: 1120px; top: 91px; width: 155px; height: 20px; }
.m4 { left: 1047px; top: 141px; width: 228px; height: 28px; }
.m5 { left: 453px; top: 209px; width: 403px; height: 154px; }

.badge {
    position: absolute;
    width: 22px;
    height: 22px;
    border-radius: 50%;
    background: #f9434a;
    color: #fff;
    font: 15px/22px "Liberation Sans", sans-serif;
    text-align: center;
    box-shadow: 1px 3px 5px rgba(0,0,0,0.4);
}
.b1 { left: 314px; top: 285px; }
.b2 { left: 1007px; top: 273px; }
.b3 { left: 1178px; top: 60px; }
.b4 { left: 1155px; top: 173px; }
.b5 { left: 654px; top: 178px; }
```
